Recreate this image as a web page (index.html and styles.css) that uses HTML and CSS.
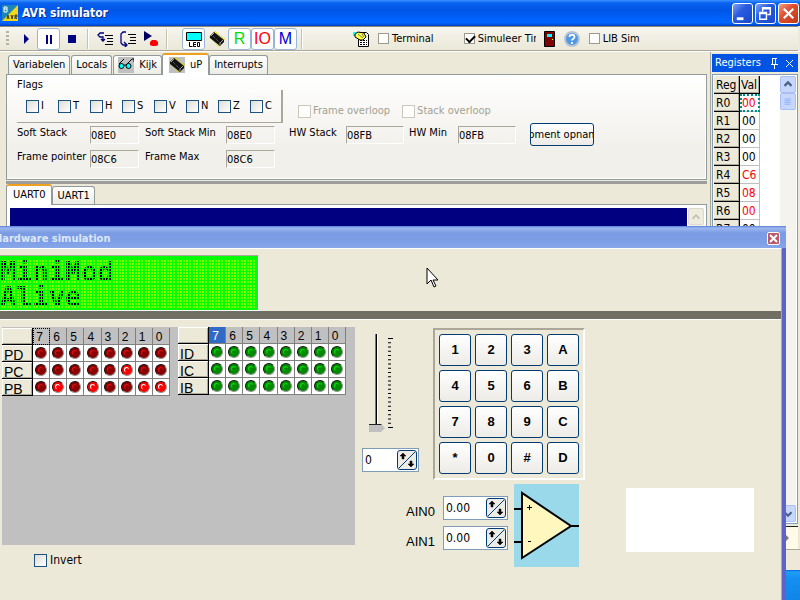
FILE: index.html
```html
<!DOCTYPE html>
<html lang="en">
<head>
<meta charset="utf-8">
<title>AVR simulator</title>
<link rel="stylesheet" href="styles.css">
</head>
<body>
<svg class="defs" aria-hidden="true">
  <symbol id="chip" viewBox="0 0 16 16">
    <path d="M5 1l10 8M1 5l10 10" stroke="#d8d000" stroke-width="3" stroke-dasharray="1 1"/>
    <path d="M5 1l10 8v2l-4 4L1 7V5z" fill="#111"/>
    <path d="M4 5l7 7" stroke="#777" stroke-dasharray="1 1"/>
    <path d="M11 14v-2l3-3M5 2L2 5" stroke="#aaa" fill="none"/>
  </symbol>
  <symbol id="spin" viewBox="0 0 18 18">
    <path d="M1 17L17 1" stroke="#003c74"/>
    <path d="M5 2L8 5H6V8H4V5H2zM13 16l3-3h-2v-3h-2v3h-2z" fill="#000" stroke="#000" stroke-width=".5"/>
  </symbol>
</svg>

<main class="app">
  <header class="titlebar">
    <svg class="logo" viewBox="0 0 16 16"><path fill="#f4d813" d="M0 0h16v16H0z"/><path fill="#1d86b8" d="M0 0h16L0 16z"/><path d="M2 2h3v5H2zM2 4h3" fill="none" stroke="#fff"/><path d="M5 14l1-4 1 4M9 10l1 4 1-4M13 14v-4h2v2h-2l2 2" fill="none" stroke="#333"/></svg>
    <h1>AVR simulator</h1>
    <button class="win" aria-label="Minimize"><svg viewBox="0 0 20 20"><path d="M4 14h7v3H4z" fill="#fff"/></svg></button>
    <button class="win" aria-label="Restore"><svg viewBox="0 0 20 20"><path d="M7 8V4h8v7h-3M7 5h8M4 9h7v7H4zM4 10h7" fill="none" stroke="#fff" stroke-width="1.5"/></svg></button>
    <button class="win close" aria-label="Close"><svg viewBox="0 0 20 20"><path d="M5 5l10 10M15 5L5 15" stroke="#fff" stroke-width="2.4"/></svg></button>
  </header>

  <div class="toolbar">
    <span class="grip"></span>
    <button class="tool" aria-label="Run"><svg viewBox="0 0 16 16"><path d="M6 3v10l5-5z" fill="#000080"/></svg></button>
    <button class="tool on" aria-label="Pause"><svg viewBox="0 0 18 18"><path d="M6 5h2v9H6zM10 5h2v9h-2z" fill="#000080"/></svg></button>
    <button class="tool" aria-label="Stop"><svg viewBox="0 0 16 16"><path d="M4 4h8v8H4z" fill="#000080"/></svg></button>
    <span class="sep"></span>
    <button class="tool" aria-label="Step into"><svg viewBox="0 0 16 16"><path d="M7 2H3L1 4l2 2h3v3M4 8l2 2 2-2" fill="none" stroke="#000080" stroke-width="1.3"/><path d="M8 4.500h8M10 7.500h6M10 10.500h6M8 13.500h8" stroke="#000"/></svg></button>
    <button class="tool" aria-label="Step over"><svg viewBox="0 0 16 16"><path d="M6 1H3L1 3v9l2 2h3M4 11l3 3-3 3" fill="none" stroke="#000080" stroke-width="1.3"/><path d="M8 3.500h8M10 6.500h6M10 9.500h6M8 12.500h8" stroke="#000"/></svg></button>
    <button class="tool" aria-label="Run to cursor"><svg viewBox="0 0 16 16"><path d="M1 0v10l8-5z" fill="#000060"/><path d="M9 9h4l2 2v3l-2 1h-4l-2-1v-3z" fill="red"/></svg></button>
    <span class="sep"></span>
    <span class="views">
      <button class="tool on" aria-label="LCD"><svg viewBox="0 0 18 18"><path d="M1.500 2.500h15v8h-15z" fill="#0ff" stroke="#000"/><path d="M4.500 12v4.500h3M11 12.500H8.500v4H11M9 14.500h2M12.500 12.500h2v4h-2z" fill="none" stroke="#000"/></svg></button>
      <button class="tool" aria-label="Chip"><svg viewBox="0 0 16 16"><use href="#chip"/></svg></button>
      <button class="tool on r">R</button>
      <button class="tool on io">IO</button>
      <button class="tool on m">M</button>
    </span>
    <span class="sep"></span>
    <button class="report" aria-label="Report"><svg viewBox="0 0 16 16"><path d="M5.500 1.500h8l2 2v12H5.500z" fill="#fff" stroke="#000"/><path d="M7 9.500h7M7 11.500h7M7 13.500h7" stroke="#000" stroke-dasharray="2 1"/><path d="M0 1h4v4H0z" fill="#0ff"/><path d="M2 3l3-2 6 1 2 4-3 3H7L2 6z" fill="#ffff40" stroke="#000"/><path d="M5 3l5 4M9 3l2 3" stroke="#777"/></svg></button>
    <label class="chk plain"><input type="checkbox">Terminal</label>
    <label class="chk plain sim"><input type="checkbox" checked>Simuleer Timers</label>
    <button class="door" aria-label="Exit"><svg viewBox="0 0 11 16"><path d="M.5.5h10v15H.5z" fill="#800000" stroke="#000"/><path d="M3 3h5v3H3z" fill="#0ff"/><path d="M8 8h1v1H8z" fill="#ff0"/></svg></button>
    <button class="help" aria-label="Help"><svg viewBox="0 0 16 16"><circle cx="8" cy="8" r="7" fill="#4f98e4" stroke="#b8c4d4" stroke-width="2"/><path d="M5.500 6c0-3 5-3 5 0 0 1.700-2.500 1.700-2.500 3.500M8 11v2" stroke="#fff" stroke-width="1.800" fill="none"/></svg></button>
    <label class="chk plain"><input type="checkbox">LIB Sim</label>
  </div>

  <div class="work">
    <section class="left">
      <nav class="tabs">
        <button>Variabelen</button><button>Locals</button><button><svg class="pic" viewBox="0 0 16 16"><path d="M1 7l5-5M9 7l5-5h2v3M6 8h3" stroke="#000" fill="none"/><circle cx="3.500" cy="9" r="2.500" fill="#0ff" stroke="#000"/><circle cx="10.500" cy="9" r="2.500" fill="#0ff" stroke="#000"/></svg>Kijk</button><button class="active"><svg class="pic" viewBox="0 0 16 16"><use href="#chip"/></svg>uP</button><button>Interrupts</button>
      </nav>
      <div class="panel">
        <div class="toprow">
          <fieldset class="flags">
            <legend>Flags</legend>
            <div class="flagbox">
              <label class="chk"><input type="checkbox">I</label>
              <label class="chk"><input type="checkbox">T</label>
              <label class="chk"><input type="checkbox">H</label>
              <label class="chk"><input type="checkbox">S</label>
              <label class="chk"><input type="checkbox">V</label>
              <label class="chk"><input type="checkbox">N</label>
              <label class="chk"><input type="checkbox">Z</label>
              <label class="chk"><input type="checkbox">C</label>
            </div>
          </fieldset>
          <label class="chk off"><input type="checkbox" disabled>Frame overloop</label>
          <label class="chk off"><input type="checkbox" disabled>Stack overloop</label>
        </div>
        <div class="stacks">
          <div class="pairs">
            <label for="ss">Soft Stack</label><input id="ss" readonly value="08E0">
            <label for="ssm">Soft Stack Min</label><input id="ssm" readonly value="08E0">
            <label for="fp">Frame pointer</label><input id="fp" readonly value="08C6">
            <label for="fm">Frame Max</label><input id="fm" readonly value="08C6">
          </div>
          <div class="pairs hw">
            <label for="hs">HW Stack</label><input id="hs" readonly value="08FB">
            <label for="hm">HW Min</label><input id="hm" readonly value="08FB">
          </div>
          <button class="push snap"><span>Moment opname</span></button>
        </div>
      </div>
      <div class="splitter"></div>
      <nav class="tabs uart"><button class="active">UART0</button><button>UART1</button></nav>
      <div class="terminal"><div class="screen"></div><div class="scroll dim"><button aria-label="Scroll up"><svg viewBox="0 0 16 16"><path d="M4 10l4-4 4 4" fill="none" stroke="#c0bfb0" stroke-width="2"/></svg></button></div></div>
    </section>

    <aside class="dock">
      <header>Registers<svg viewBox="0 0 32 14"><path d="M6 2.500h5M6.500 3v5M9.500 3v5M5 8.500h7M8.500 9v4" stroke="#fff" fill="none"/><path d="M9 3h1v5H9z" fill="#fff"/><path d="M20 4l7 7M27 4l-7 7" stroke="#fff"/></svg></header>
      <div class="regs">
        <table>
          <tr><th>Reg</th><th>Val</th></tr>
          <tr><th>R0</th><td class="hot focus">00</td></tr>
          <tr><th>R1</th><td>00</td></tr>
          <tr><th>R2</th><td>00</td></tr>
          <tr><th>R3</th><td>00</td></tr>
          <tr><th>R4</th><td class="hot">C6</td></tr>
          <tr><th>R5</th><td class="hot">08</td></tr>
          <tr><th>R6</th><td class="hot">00</td></tr>
          <tr><th>R7</th><td>00</td></tr>
        </table>
        <div class="scroll">
          <button aria-label="Scroll up"><svg viewBox="0 0 16 16"><path d="M4 9l4-4 4 4" fill="none" stroke="#4d6185" stroke-width="2.500"/></svg></button>
          <button aria-label="Scroll thumb"><svg viewBox="0 0 16 16"><path d="M4 4.500h7M4 6.500h7M4 8.500h7M4 10.500h7" stroke="#8cb0f8"/></svg></button>
          <button class="down" aria-label="Scroll down"><svg viewBox="0 0 16 16"><path d="M4 6l4 4 4-4" fill="none" stroke="#4d6185" stroke-width="2.500"/></svg></button>
        </div>
      </div>
      <div class="hint"><svg viewBox="0 0 5 9"><path d="M1 2l3 3-3 3" fill="#777"/></svg></div>
    </aside>
  </div>
  <footer class="status"></footer>
</main>
<div class="taskbar"></div>

<section class="hardware">
  <header><h2>Hardware simulation</h2><button aria-label="Close"><svg viewBox="0 0 11 11"><path d="M2 2l7 7M9 2L2 9" stroke="#fff" stroke-width="2"/></svg></button></header>
  <div class="inner">
    <div class="lcd"><pre>MiniMod
Alive</pre></div>
    <div class="band"></div>
    <div class="bench">
      <div class="ports">
        <div class="grey">
          <table class="leds">
            <tr><th></th><td class="dots">7</td><td>6</td><td>5</td><td>4</td><td>3</td><td>2</td><td>1</td><td>0</td></tr>
            <tr><th>PD</th><td><i></i></td><td><i></i></td><td><i></i></td><td><i></i></td><td><i></i></td><td><i></i></td><td><i></i></td><td><i></i></td></tr>
            <tr><th>PC</th><td><i></i></td><td><i></i></td><td><i></i></td><td><i></i></td><td><i></i></td><td><i class="lit"></i></td><td><i></i></td><td><i></i></td></tr>
            <tr><th>PB</th><td><i></i></td><td><i class="lit"></i></td><td><i></i></td><td><i class="lit"></i></td><td><i></i></td><td><i></i></td><td><i class="lit"></i></td><td><i class="lit"></i></td></tr>
          </table>
          <table class="leds green">
            <tr><th></th><td class="sel">7</td><td>6</td><td>5</td><td>4</td><td>3</td><td>2</td><td>1</td><td>0</td></tr>
            <tr><th>ID</th><td><i></i></td><td><i></i></td><td><i></i></td><td><i></i></td><td><i></i></td><td><i></i></td><td><i></i></td><td><i></i></td></tr>
            <tr><th>IC</th><td><i></i></td><td><i></i></td><td><i></i></td><td><i></i></td><td><i></i></td><td><i></i></td><td><i></i></td><td><i></i></td></tr>
            <tr><th>IB</th><td><i></i></td><td><i></i></td><td><i></i></td><td><i></i></td><td><i></i></td><td><i></i></td><td><i></i></td><td><i></i></td></tr>
          </table>
        </div>
        <label class="chk invert"><input type="checkbox">Invert</label>
      </div>
      <div class="right">
        <div class="controls">
          <div class="analog">
            <div class="slide">
              <input type="range" min="0" max="255" value="0" aria-label="Analog value">
              <svg viewBox="0 0 6 98"><path d="M2.500 4v90" stroke="#000" stroke-width="3" stroke-dasharray="1 3.238"/><path d="M1 4.500h5M1 93.500h5" stroke="#000"/></svg>
            </div>
            <div class="spin small"><input value="0" aria-label="Channel"><button aria-label="Step"><svg viewBox="0 0 18 18"><use href="#spin"/></svg></button></div>
          </div>
          <div class="keypad">
            <button class="push">1</button><button class="push">2</button><button class="push">3</button><button class="push">A</button>
            <button class="push">4</button><button class="push">5</button><button class="push">6</button><button class="push">B</button>
            <button class="push">7</button><button class="push">8</button><button class="push">9</button><button class="push">C</button>
            <button class="push">*</button><button class="push">0</button><button class="push">#</button><button class="push">D</button>
          </div>
        </div>
        <div class="compare">
          <div class="ains">
            <label for="a0">AIN0</label><div class="spin"><input id="a0" value="0.00"><button aria-label="Step AIN0"><svg viewBox="0 0 18 18"><use href="#spin"/></svg></button></div>
            <label for="a1">AIN1</label><div class="spin"><input id="a1" value="0.00"><button aria-label="Step AIN1"><svg viewBox="0 0 18 18"><use href="#spin"/></svg></button></div>
          </div>
          <svg class="opamp" viewBox="0 0 65 83"><path fill="#99d9ea" d="M0 0h65v83H0z"/><path d="M8 9v65l49-32z" fill="#fff7bd" stroke="#000" stroke-width="2"/><path d="M0 25h8M0 58h8M57 42h8" stroke="#000" stroke-width="2"/><path d="M13 23.500h5M15.500 21v5M14 57.500h3" stroke="#000"/></svg>
          <div class="blank"></div>
        </div>
      </div>
    </div>
  </div>
</section>
<svg class="cursor" viewBox="0 0 12 21"><path d="M1 1v16l4-4 3 7 2-1-3-6h5z" fill="#fff" stroke="#000"/></svg>
</body>
</html>
```
FILE: styles.css
```css
* { box-sizing: border-box; }
body { margin: 0; height: 100vh; display: flex; flex-direction: column; overflow: hidden; position: relative;
  background: #ece9d8; color: #000; font: 11px/14px "DejaVu Sans Condensed", "DejaVu Sans", sans-serif; }
button, input { font: inherit; color: inherit; margin: 0; padding: 0; }
button { border: 0; background: none; }
svg { display: block; }
h1, h2, pre { margin: 0; }
.defs { position: absolute; width: 0; height: 0; }
.app { flex: 1; min-height: 0; display: flex; flex-direction: column; }

.titlebar { display: flex; align-items: center; gap: 2px; height: 26px; padding: 0 1px 0 2px;
  background: linear-gradient(#3a93ff 0, #0a62f0 3px, #0055e5 10px, #0063ff 20px, #0064ff 23px, #0040c0 26px); }
.logo { width: 16px; height: 16px; }
.titlebar h1 { flex: 1; margin-left: 2px; color: #fff; font-size: 12px; line-height: 16px; text-shadow: 1px 1px #0a2a80; }
.win { width: 21px; height: 21px; border: 1px solid #fff; border-radius: 3px; background: linear-gradient(135deg, #7fa4f5, #2a5be0 40%, #1a48c8); }
.win.close { background: linear-gradient(135deg, #f0a088, #e05030 40%, #c03818); }

.toolbar { display: flex; align-items: center; height: 25px; margin-right: 2px; padding-left: 6px;
  border-bottom: 1px solid #aca899; border-top: 1px solid #8a8878; background: linear-gradient(#f6f5ee, #ebe8d8); white-space: nowrap; }
.grip { width: 3px; height: 15px; margin-right: 5px; background: repeating-linear-gradient(#b5b2a2 0 2px, transparent 2px 4px); }
.tool { width: 23px; height: 22px; display: grid; place-items: center; border: 1px solid transparent; border-radius: 3px; font: 16px/18px "Liberation Sans", sans-serif; }
.tool svg { width: 16px; height: 16px; }
.tool.on { border-color: #98b5d6; background: #fff; }
.tool.on svg { width: 18px; height: 18px; }
.r { color: #00e000; } .io { color: red; } .m { color: #0000d8; }
.sep { width: 2px; height: 20px; margin: 0 4px; border-left: 1px solid #c5c2b0; border-right: 1px solid #fff; }
.views { display: flex; margin-left: 10px; }
.report { width: 16px; margin-left: 46px; margin-right: 9px; }
.report svg { width: 16px; height: 16px; }
.chk { display: flex; align-items: center; gap: 3px; white-space: nowrap; }
.chk input { appearance: none; flex: none; width: 13px; height: 13px; border: 1px solid #1c5180; background: linear-gradient(135deg, #dcdcd7, #fff); }
.chk.plain input { width: 11px; height: 11px; border-color: #9c9a8c; background: #fff; }
.chk input:checked { position: relative; }
.chk input:checked::after { content: ""; position: absolute; left: 1px; top: 1px; width: 7px; height: 4px; border: solid #000; border-width: 0 0 2px 2px; transform: rotate(-45deg); }
.chk.off { color: #a1a192; }
.chk.off input { border-color: #cac8bb; background: #fff; }
.sim { width: 72px; margin-left: 30px; overflow: hidden; }
.door { margin-left: 8px; } .door svg { width: 11px; height: 16px; }
.help { margin: 0 9px; } .help svg { width: 16px; height: 16px; }

.work { flex: 1; min-height: 0; display: flex; border-top: 1px solid #fff; }
.left { flex: 1; min-width: 0; display: flex; flex-direction: column; padding: 2px 3px 0 6px; border-right: 1px solid #aca899; }
.tabs { display: flex; align-items: flex-end; height: 20px; padding-left: 2px; flex: none; }
.tabs button { height: 19px; padding: 0 4px; margin-right: 1px; display: flex; align-items: center; gap: 5px; border: 1px solid #919b9c; border-bottom: 0; border-radius: 3px 3px 0 0; background: linear-gradient(#fff, #ecebe5); }
.tabs .active { height: 22px; margin: 0 0 -1px -1px; padding: 0 6px 1px; border-top: 2px solid #f0a020; background: #fff; z-index: 1; }
.pic { width: 16px; height: 16px; background: #c0c0c0; }
.panel { height: 106px; flex: none; padding: 5px 9px; border: 1px solid #919b9c; background: linear-gradient(#fff, #f2f0eb 70%); box-shadow: inset -1px -1px #fff; }
.toprow { display: flex; }
.flags { border: 0; margin: 0 15px 0 1px; padding: 0; }
.flags legend { padding: 0; height: 10px; line-height: 10px; overflow: hidden; }
.flagbox { display: grid; grid-template-columns: repeat(8, 32px); width: 266px; height: 33px; padding-left: 9px; align-items: center; border: solid #aca899; border-width: 0 2px 1px 0; box-shadow: inset 0 1px #fff; }
.chk.off { align-self: flex-end; margin: 0 12px 5px 0; gap: 2px; }
.flagbox .chk { gap: 2px; }
.stacks { display: flex; align-items: flex-start; padding-left: 1px; }
.pairs { display: grid; grid-template-columns: 73px 55px 81px 50px; row-gap: 6px; padding-top: 3px; margin-right: 13px; }
.pairs.hw { grid-template-columns: 57px 63px 49px 59px; }
.pairs label { height: 18px; }
.pairs input { width: 49px; height: 18px; border: 1px solid; border-color: #aca899 #fff #fff #aca899; background: transparent; }
.pairs.hw input { width: 58px; }
.push { border: 1px solid #003c74; border-radius: 3px; background: linear-gradient(#fff, #ecebe6); }
.snap { width: 64px; height: 23px; overflow: hidden; display: flex; justify-content: center; align-items: center; white-space: nowrap; }
.splitter { height: 3px; margin: 1px 0 0; background: #9d9d9d; flex: none; }
.uart { padding-left: 1px; }
.uart button { height: 18px; }
.uart .active { height: 21px; padding: 0 6px 2px; }
.terminal { flex: 1; min-height: 0; display: flex; gap: 1px; padding: 3px 2px 0 3px; border: 1px solid #919b9c; background: #fff; }
.screen { flex: 1; background: #000080; }
.scroll { width: 16px; display: flex; flex-direction: column; background: #f4f3ee; }
.scroll button { width: 16px; height: 17px; border: 1px solid #a9bff5; border-radius: 2px; background: #c6d6fd; }
.dim button { border-color: #dddacb; background: #eeebdf; }

.dock { width: 89px; display: flex; flex-direction: column; padding: 2px 2px 0 1px; }
.dock header { display: flex; justify-content: space-between; align-items: center; height: 18px; padding-left: 3px; margin-bottom: 2px; background: #0054e3; color: #fff; }
.dock header svg { width: 32px; height: 14px; }
.regs { flex: 1; min-height: 0; display: flex; justify-content: space-between; border: 1px solid #7f9db9; padding: 1px; background: #fff; overflow: hidden; }
.regs table { border-collapse: separate; border-spacing: 0; align-self: flex-start; table-layout: fixed; width: 46px; font: 12px/16px "DejaVu Sans Condensed", sans-serif; }
.regs th { width: 26px; height: 18px; padding: 0 0 0 2px; text-align: left; font-weight: 400; background: #ece9d8; border: solid #000; border-width: 0 1px 1px 0; box-shadow: inset -1px -1px #aca899; }
.regs tr:first-child th + th { width: 20px; padding: 0 0 0 1px; overflow: hidden; }
.regs td { height: 18px; padding: 0 0 0 2px; border: solid #c0c0c0; border-width: 0 1px 1px 0; }
.regs .hot { color: red; }
.regs .focus { outline: 2px dotted #008c8c; outline-offset: -2px; }
.down { margin-top: auto; }
.hint { height: 23px; margin-top: 2px; padding: 6px 0 0 73px; border-top: 1px solid #222; background: #fffbe8; }
.hint svg { width: 5px; height: 9px; }
.status { height: 21px; border-top: 1px solid #aca899; flex: none; }
.taskbar { height: 30px; flex: none; background: linear-gradient(#1060d8, #20a0f8 2px, #1490f0 8px, #1285e8); }

.hardware { position: absolute; left: -10px; right: 14px; top: 226px; bottom: 0; display: flex; flex-direction: column; background: #ece9d8; border-right: 4px solid #5f62c8; }
.hardware header { display: flex; align-items: center; justify-content: space-between; height: 22px; padding: 3px 2px 0 4px; margin-right: -4px; flex: none; background: linear-gradient(#5a7ed8, #9db9f0 2px, #7b9be3 7px, #7d9fe6 16px, #88a6ea); }
.hardware h2 { font-size: 11px; line-height: 16px; color: #dce6fa; }
.hardware header button { width: 13px; height: 13px; margin-right: 4px; border: 1px solid #fff; border-radius: 2px; background: #b85868; }
.inner { flex: 1; padding-left: 10px; border-top: 1px solid #fff; border-right: 1px solid #aca899; }
.lcd { position: relative; width: 259px; height: 56px; margin-top: 6px; padding-top: 3px; border: solid; border-width: 1px 1px 1px 0; border-color: #aca899 #fff #fff; background: #0f0; }
.lcd pre { height: 50px; width: 256px; overflow: hidden; font: bold 27px/25px "DejaVu Sans Mono", monospace; background: #80ff00; }
.lcd::after { content: ""; position: absolute; left: 0; top: 3px; width: 256px; height: 50px;
  background: repeating-linear-gradient(90deg, #0f0 0 1px, transparent 1px 3px, #0f0 3px 4px, transparent 4px 6px, #0f0 6px 7px, transparent 7px 9px, #0f0 9px 10px, transparent 10px 12px, #0f0 12px 13px, transparent 13px 15px, #0f0 15px 16px),
  repeating-linear-gradient(#0f0 0 1px, transparent 1px 3px, #0f0 3px 4px, transparent 4px 6px, #0f0 6px 7px, transparent 7px 9px, #0f0 9px 10px, transparent 10px 12px, #0f0 12px 13px, transparent 13px 15px, #0f0 15px 16px, transparent 16px 18px, #0f0 18px 19px, transparent 19px 21px, #0f0 21px 22px, transparent 22px 24px, #0f0 24px 25px); }
.band { height: 9px; background: #716f64; border-bottom: 1px solid #fff; }
.bench { display: flex; padding-top: 7px; }
.ports { width: 353px; margin: 0 7px 0 2px; }
.grey { display: flex; gap: 8px; height: 218px; background: #c0c0c0; align-items: flex-start; }
.leds { border-collapse: separate; border-spacing: 0; table-layout: fixed; width: 168px; margin-top: 1px; font: 12px/14px "Liberation Sans", sans-serif; }
.leds.green { margin-top: 0; }
.leds th { width: 31px; height: 17px; padding: 4px 0 0 2px; line-height: 12px; text-align: left; font-size: 14px; font-weight: 400; background: #ece9d8; border: solid #000; border-width: 0 1px 1px 0; box-shadow: inset 1px 1px #fff, inset -1px -1px #aca899; }
.leds td { width: 17px; height: 17px; padding: 0; background: #fff; border: solid #808080; border-width: 0 1px 1px 0; }
.leds tr:first-child td { background: #c0c0c0; padding: 2px 0 0 3px; }
.leds .dots { outline: 1px dotted #000; outline-offset: -1px; }
.leds tr:first-child .sel { background: #316ac5; color: #fff; }
.leds i { display: block; position: relative; width: 12px; height: 12px; margin: 0 auto; border: 1px solid; border-color: #111 #999 #999 #111; border-radius: 50%; background: #880000; }
.leds i::after { content: ""; position: absolute; left: 2px; top: 2px; width: 4px; height: 4px; border: solid #e01010; border-width: 1px 0 0 1px; border-radius: 50%; }
.leds .lit { background: #ff0000; }
.leds .lit::after { border-color: #fff; }
.green i { background: #008800; }
.green i::after { border-color: #00e000; }
.invert { margin: 8px 0 0 32px; font-size: 12px; }
.right { flex: 1; padding-top: 1px; }
.controls { display: flex; gap: 14px; }
.analog { width: 57px; padding-top: 6px; }
.slide { display: flex; gap: 2px; height: 98px; margin: 0 0 16px 7px; }
.slide input { appearance: none; writing-mode: vertical-lr; direction: rtl; width: 16px; height: 98px; background: linear-gradient(90deg, transparent 6px, #777 6px 7px, #000 7px 8px, #fff 8px 9px, transparent 9px); }
.slide input::-webkit-slider-thumb { appearance: none; width: 16px; height: 8px; background: linear-gradient(#222 1px, #c0c0c0 1px); clip-path: polygon(0 0, 75% 0, 100% 50%, 75% 100%, 0 100%); }
.slide svg { width: 6px; height: 98px; }
.spin { display: flex; width: 65px; height: 24px; padding: 1px; border: 1px solid #7f9db9; background: #fff; }
.spin input { flex: 1; min-width: 0; border: 0; padding-left: 1px; background: none; font-size: 12px; }
.spin button { width: 20px; height: 20px; border: 1px solid #003c74; border-radius: 3px; background: #ecebe6; }
.spin.small { width: 57px; }
.keypad { display: grid; grid-template-columns: repeat(4, 32px); grid-auto-rows: 32px; gap: 4px; padding: 4px; border: 2px solid; border-color: #aca899 #fff #fff #aca899; }
.keypad .push { font: bold 13px/16px "Liberation Sans", sans-serif; }
.compare { display: flex; align-items: flex-start; padding: 4px 0 0 44px; }
.ains { display: grid; grid-template-columns: 37px 65px; row-gap: 6px; padding-top: 12px; margin-right: 6px; }
.ains label { padding-top: 9px; font: 13px/14px "Liberation Sans", sans-serif; }
.opamp { width: 65px; height: 83px; margin-right: 47px; }
.blank { width: 128px; height: 64px; margin-top: 4px; background: #fff; }
.cursor { position: absolute; left: 426px; top: 267px; width: 12px; height: 21px; }
```
